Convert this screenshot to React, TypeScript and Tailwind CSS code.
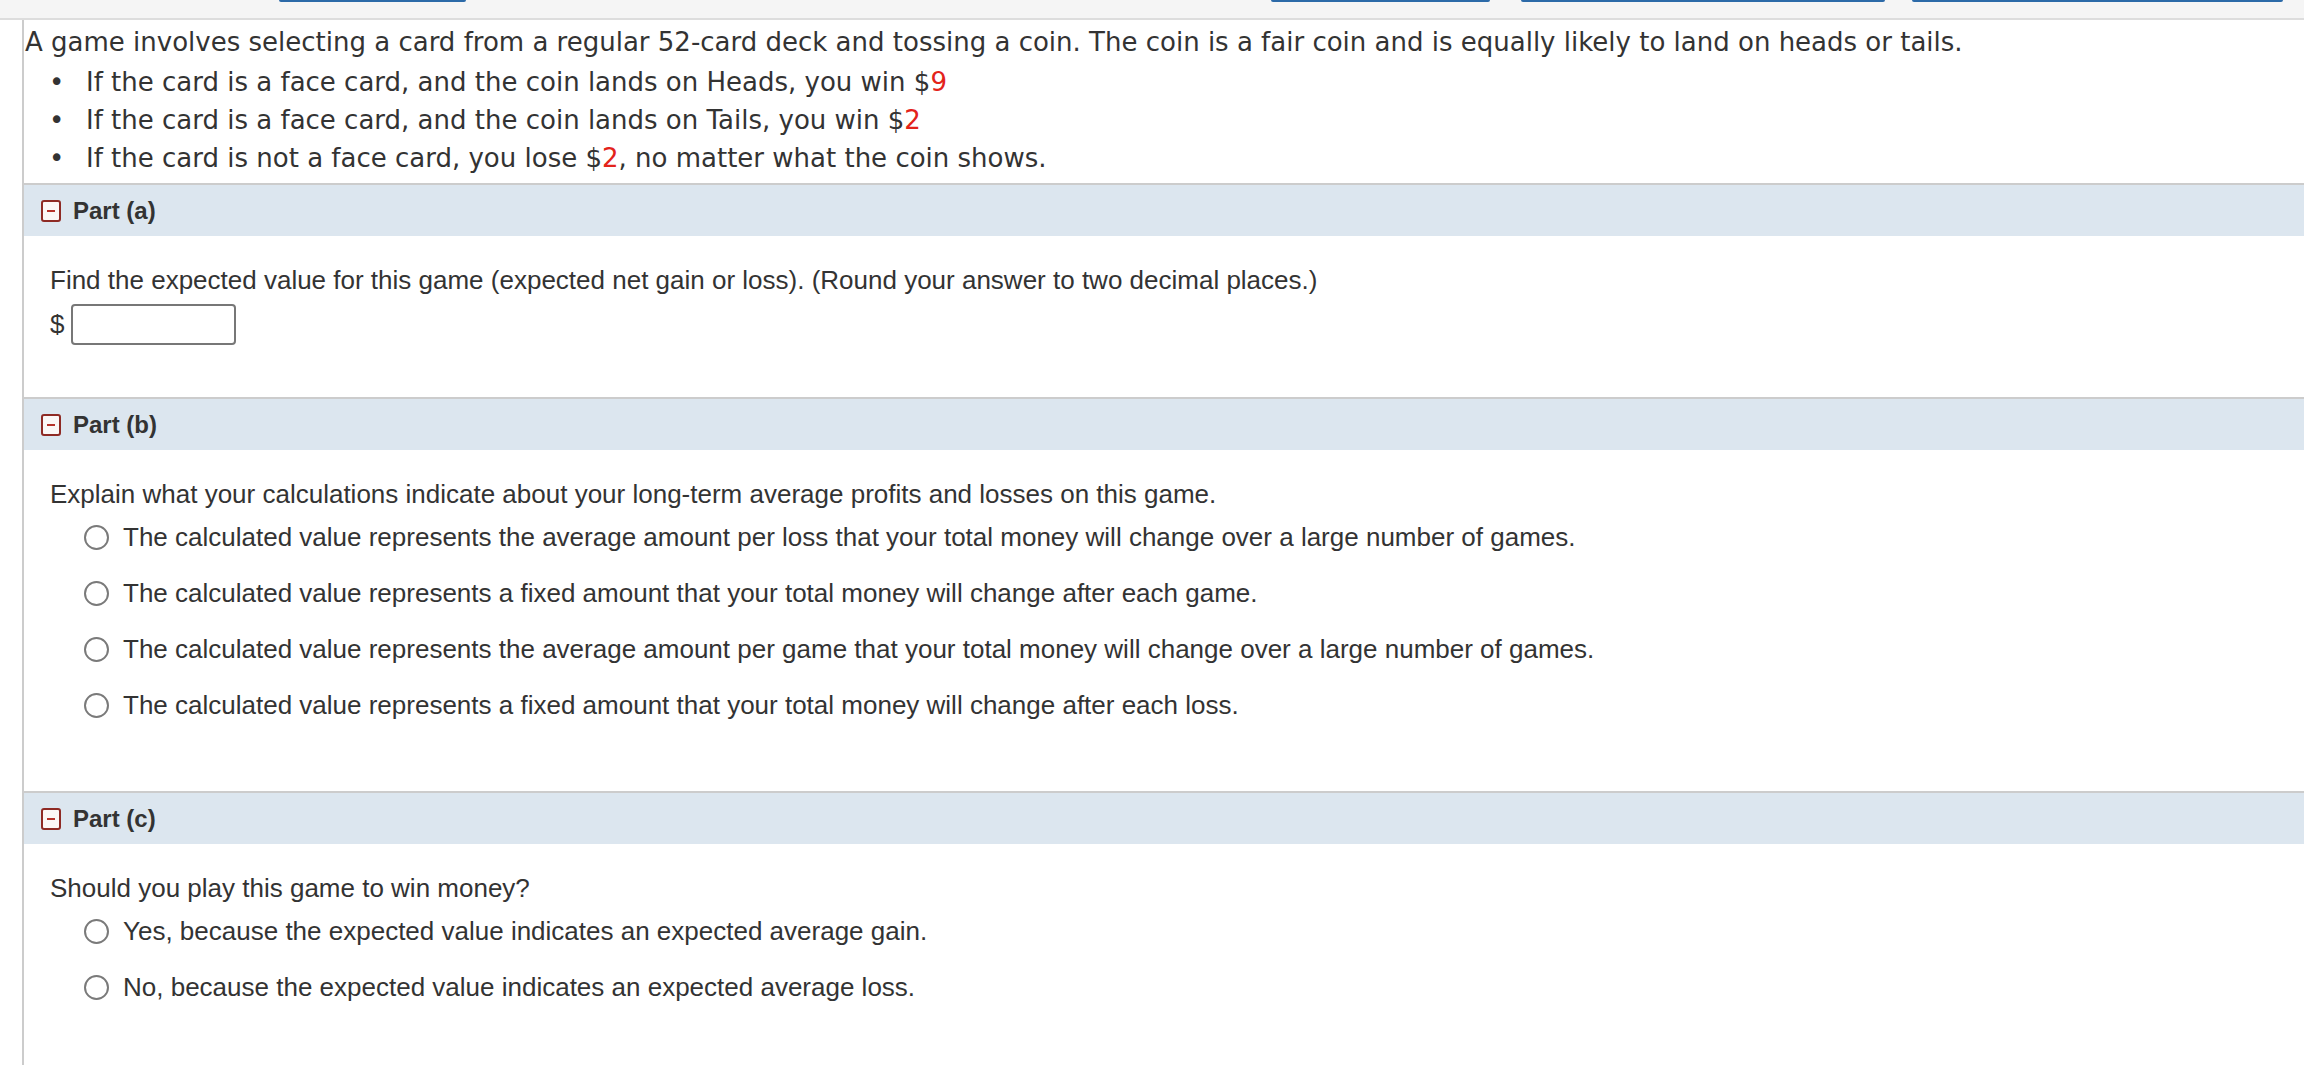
import React from 'react';

const sans = { fontFamily: '"Liberation Sans", Arial, sans-serif' };

function CollapseIcon() {
  return (
    <span className="w-[20px] h-[22px] rounded-[3px] border-2 border-[#8e2a24] bg-[#fbf7f6] flex items-center justify-center shrink-0">
      <span className="block w-[8px] h-[2px] bg-[#b5322a]" />
    </span>
  );
}

function Radio({ label }: { label: string }) {
  return (
    <label className="flex items-center h-[40px] pl-[34px] gap-[14px] text-[26px] text-[#333]">
      <span className="w-[25px] h-[25px] rounded-full border-2 border-[#7a7a7a] bg-white shrink-0" />
      <span>{label}</span>
    </label>
  );
}

function Header({ title }: { title: string }) {
  return (
    <div className="h-[53px] border-t-2 border-[#cccccc] bg-[#dce6ef] flex items-center pl-[17px] gap-[12px]">
      <CollapseIcon />
      <span className="text-[24px] font-bold text-[#333]">{title}</span>
    </div>
  );
}

export default function App() {
  const red = 'text-[#e3231b]';
  return (
    <div className="min-h-screen bg-white" style={sans}>
      {/* top strip with the bottoms of the nav tabs */}
      <div className="h-[20px] bg-[#f5f5f5] border-b-2 border-[#dddddd] flex items-start">
        <span className="ml-[279px] w-[187px] h-[2px] bg-[#2c6aa8] rounded-b shrink-0" />
        <span className="ml-[805px] w-[219px] h-[2px] bg-[#2c6aa8] rounded-b shrink-0" />
        <span className="ml-[31px] w-[364px] h-[2px] bg-[#2c6aa8] rounded-b shrink-0" />
        <span className="ml-[27px] w-[371px] h-[2px] bg-[#2c6aa8] rounded-b shrink-0" />
      </div>

      <div className="ml-[22px] border-l-2 border-[#cccccc] min-h-[1045px]">
        {/* intro */}
        <div
          className="pt-[3px] pl-[1px] text-[26px] leading-[38px] text-[#333] whitespace-nowrap"
          style={{ fontFamily: '"DejaVu Sans", Verdana, sans-serif' }}
        >
          <div>A game involves selecting a card from a regular 52-card deck and tossing a coin. The coin is a fair coin and is equally likely to land on heads or tails.</div>
          <div className="flex mt-[2px]">
            <span className="w-[61px] pl-[24px]">•</span>
            <span>If the card is a face card, and the coin lands on Heads, you win $<span className={red}>9</span></span>
          </div>
          <div className="flex">
            <span className="w-[61px] pl-[24px]">•</span>
            <span>If the card is a face card, and the coin lands on Tails, you win $<span className={red}>2</span></span>
          </div>
          <div className="flex">
            <span className="w-[61px] pl-[24px]">•</span>
            <span>If the card is not a face card, you lose $<span className={red}>2</span>, no matter what the coin shows.</span>
          </div>
        </div>

        {/* Part (a) */}
        <div className="mt-[6px]">
          <Header title="Part (a)" />
          <div className="pt-[24px] pb-[52px] pl-[26px] text-[26px] text-[#333]">
            <div className="h-[40px] flex items-center">
              Find the expected value for this game (expected net gain or loss). (Round your answer to two decimal places.)
            </div>
            <div className="mt-[4px] flex items-center gap-[7px]">
              <span>$</span>
              <input className="w-[165px] h-[41px] border-2 border-[#777] rounded-[4px] px-2 outline-none" />
            </div>
          </div>
        </div>

        {/* Part (b) */}
        <div>
          <Header title="Part (b)" />
          <div className="pt-[24px] pb-[66px] pl-[26px] text-[26px] text-[#333]">
            <div className="h-[40px] flex items-center">
              Explain what your calculations indicate about your long-term average profits and losses on this game.
            </div>
            <div className="mt-[3px] flex flex-col gap-[16px]">
              <Radio label="The calculated value represents the average amount per loss that your total money will change over a large number of games." />
              <Radio label="The calculated value represents a fixed amount that your total money will change after each game." />
              <Radio label="The calculated value represents the average amount per game that your total money will change over a large number of games." />
              <Radio label="The calculated value represents a fixed amount that your total money will change after each loss." />
            </div>
          </div>
        </div>

        {/* Part (c) */}
        <div>
          <Header title="Part (c)" />
          <div className="pt-[24px] pb-[40px] pl-[26px] text-[26px] text-[#333]">
            <div className="h-[40px] flex items-center">Should you play this game to win money?</div>
            <div className="mt-[3px] flex flex-col gap-[16px]">
              <Radio label="Yes, because the expected value indicates an expected average gain." />
              <Radio label="No, because the expected value indicates an expected average loss." />
            </div>
          </div>
        </div>
      </div>
    </div>
  );
}
